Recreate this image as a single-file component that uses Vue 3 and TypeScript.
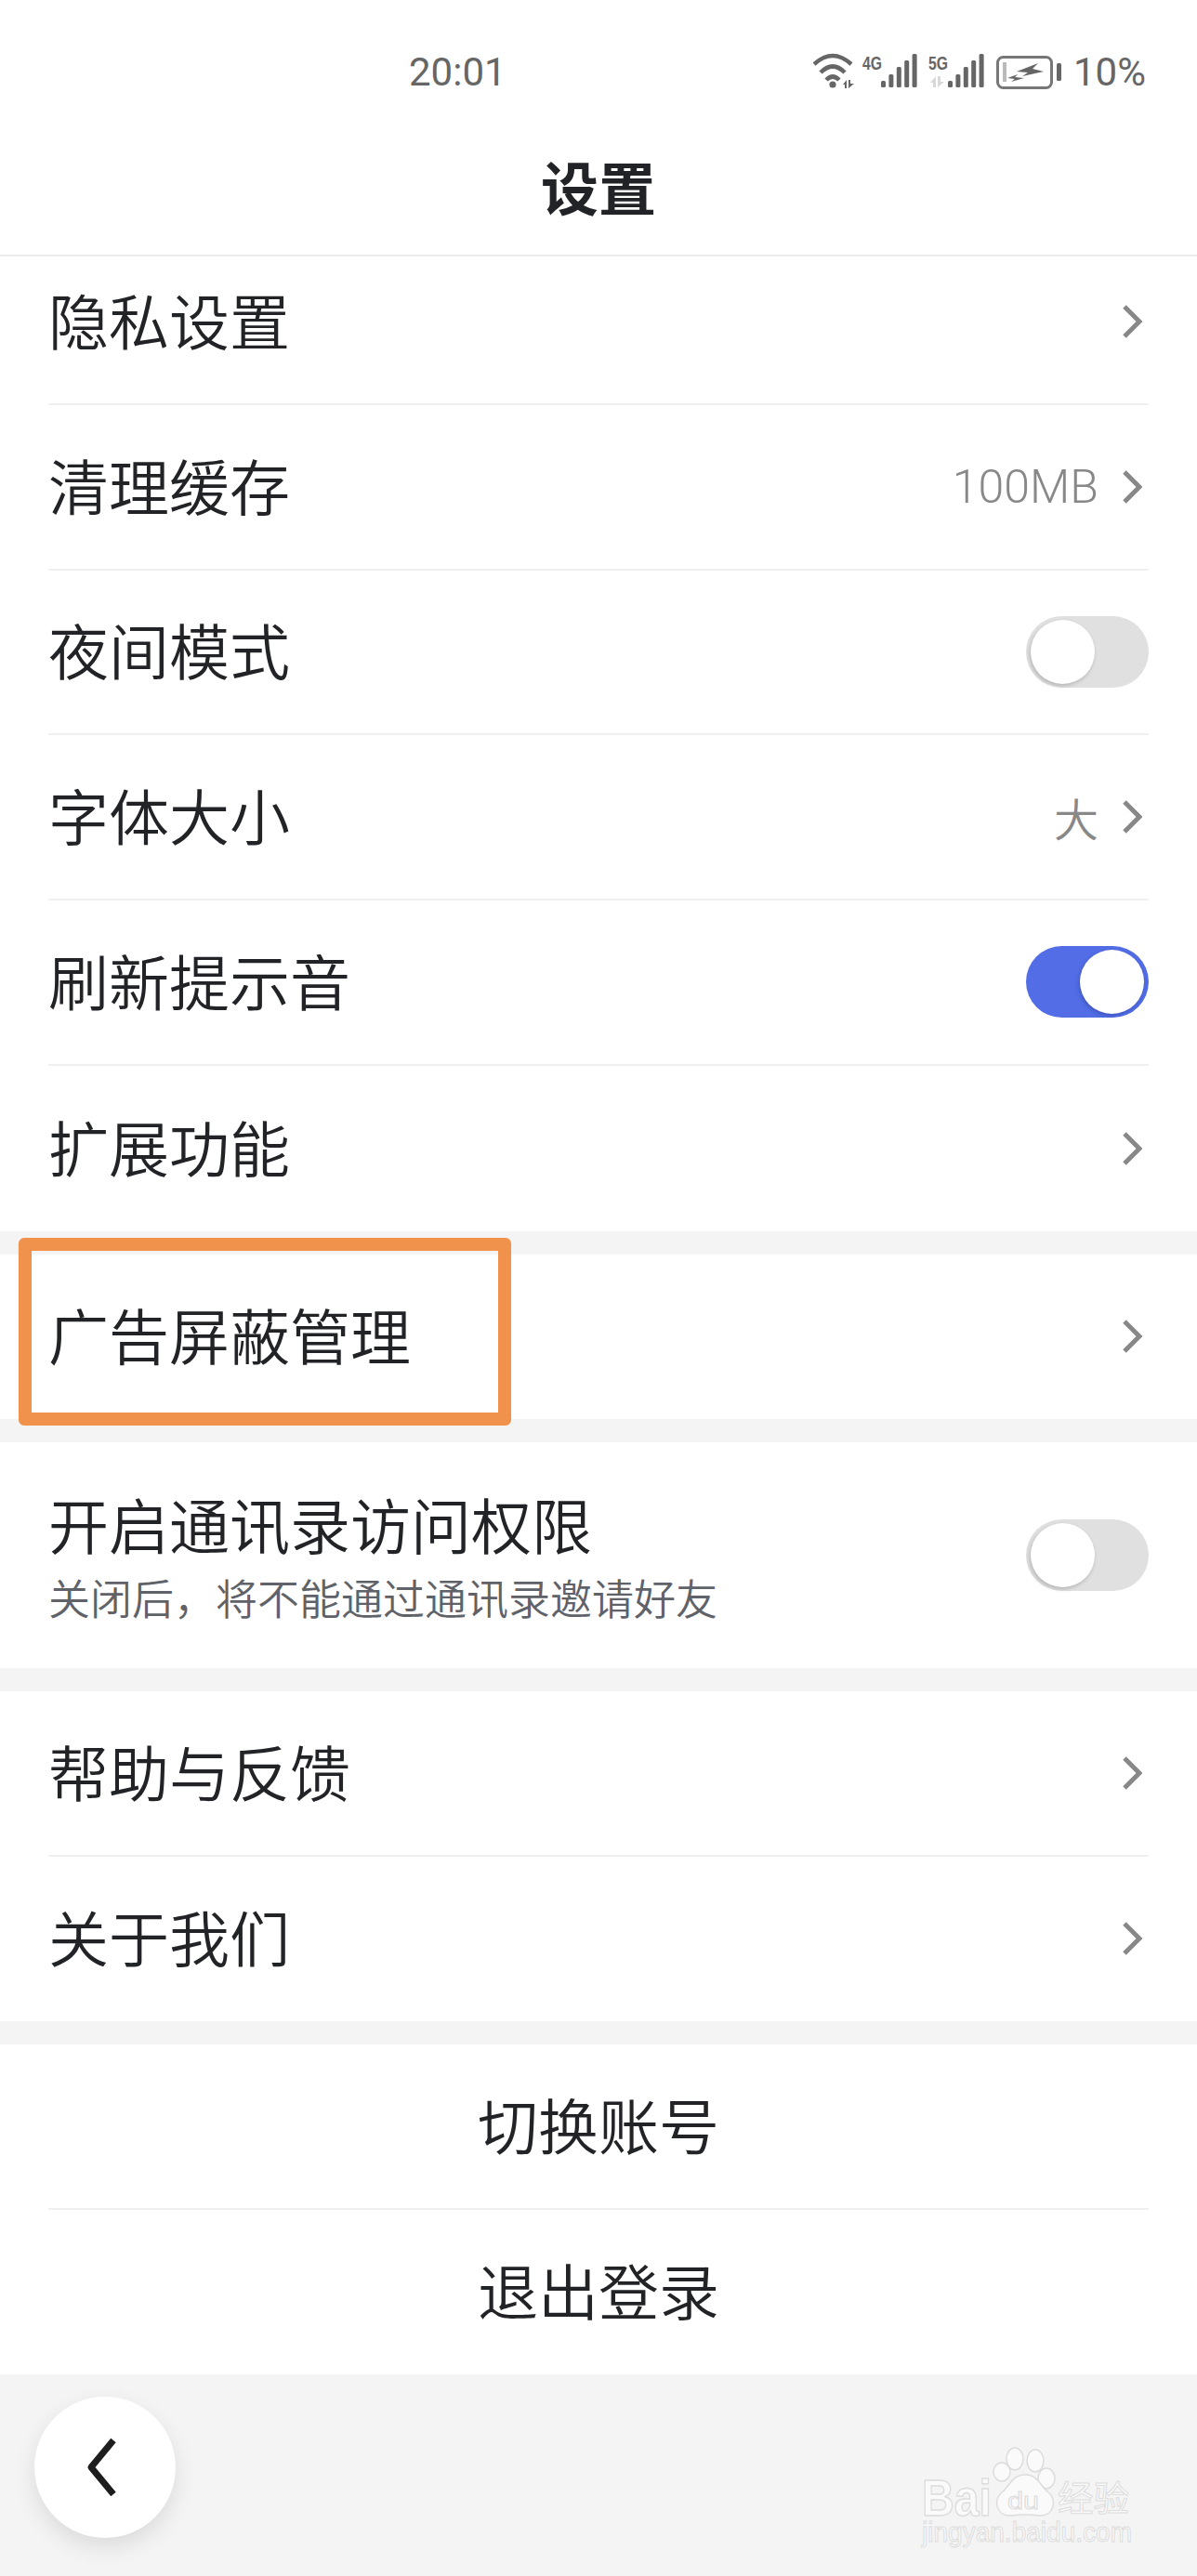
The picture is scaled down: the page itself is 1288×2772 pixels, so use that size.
<script setup lang="ts">
interface Row {
  label: string
  value?: string
  toggle?: boolean
  sub?: string
  center?: boolean
  boxed?: boolean
}

const sections: { key: string; rows: Row[] }[] = [
  {
    key: 'general',
    rows: [
      { label: '隐私设置' },
      { label: '清理缓存', value: '100MB' },
      { label: '夜间模式', toggle: false },
      { label: '字体大小', value: '大' },
      { label: '刷新提示音', toggle: true },
      { label: '扩展功能' },
    ],
  },
  { key: 'ads', rows: [{ label: '广告屏蔽管理', boxed: true }] },
  {
    key: 'contacts',
    rows: [{ label: '开启通讯录访问权限', toggle: false, sub: '关闭后，将不能通过通讯录邀请好友' }],
  },
  { key: 'help', rows: [{ label: '帮助与反馈' }, { label: '关于我们' }] },
  {
    key: 'account',
    rows: [
      { label: '切换账号', center: true },
      { label: '退出登录', center: true },
    ],
  },
]

const bars = [
  { x: 0, h: 7 },
  { x: 8.4, h: 14 },
  { x: 16.8, h: 22 },
  { x: 25.2, h: 29 },
  { x: 33.6, h: 36 },
]
</script>

<template>
  <div class="page">
    <div class="status">
      <span class="time">20:01</span>
      <svg class="status-icons" width="285" height="42" viewBox="0 0 285 42">
        <!-- wifi -->
        <g fill="none" stroke="#666" stroke-width="4.5">
          <path d="M1 13 Q21 -5 41 13" />
          <path d="M8 22 Q21 9 34 22" />
          <path d="M14 30 Q21 23 28 30" />
        </g>
        <circle cx="21" cy="35" r="3.6" fill="#666" />
        <path d="M32 35L36 30V39H34V35ZM38 30H40V34H44L38 39Z" fill="#666" />
        <!-- sim 1 -->
        <text x="53" y="19" class="net" textLength="21" lengthAdjust="spacingAndGlyphs">4G</text>
        <g transform="translate(73 0)">
          <rect v-for="b in bars" :key="b.x" :x="b.x" :y="38 - b.h" width="5" :height="b.h" rx="1.5" fill="#666" />
        </g>
        <!-- sim 2 -->
        <text x="124" y="19" class="net" textLength="21" lengthAdjust="spacingAndGlyphs">5G</text>
        <path d="M126 33L132 26V38H129V33ZM134 26H137V32H141L134 38Z" fill="#d8d8d8" />
        <g transform="translate(145 0)">
          <rect v-for="b in bars" :key="b.x" :x="b.x" :y="38 - b.h" width="5" :height="b.h" rx="1.5" fill="#666" />
        </g>
        <!-- battery -->
        <rect x="198.5" y="5.5" width="58" height="33" rx="6" fill="none" stroke="#777" stroke-width="3" />
        <rect x="204" y="11" width="4" height="21" fill="#bbb" />
        <path d="M219 21L242 12L236 18L248 21L225 26L231 22ZM209 28L220 24L217 27L227 28L213 32L217 29Z" fill="#666" />
        <rect x="262" y="12" width="5" height="19" rx="1.5" fill="#666" />
      </svg>
      <span class="battery">10%</span>
    </div>

    <header class="nav">设置</header>

    <div class="scroll">
      <section v-for="s in sections" :key="s.key" class="section" :class="s.key">
        <div v-for="r in s.rows" :key="r.label" class="row" :class="{ center: r.center }">
          <div class="row-body">
            <div class="label">{{ r.label }}</div>
            <div v-if="r.sub" class="sub">{{ r.sub }}</div>
          </div>
          <span v-if="r.value" class="value" :class="{ latin: r.value === '100MB' }">{{ r.value }}</span>
          <span v-if="r.toggle !== undefined" class="toggle" :class="{ on: r.toggle }"><i></i></span>
          <svg v-else-if="!r.center" class="chevron" width="22" height="38" viewBox="0 0 22 38">
            <path d="M3 3 L19 19 L3 35" fill="none" stroke="#888" stroke-width="5" />
          </svg>
          <div v-if="r.boxed" class="highlight"></div>
        </div>
      </section>
    </div>

    <button class="back" type="button" aria-label="返回">
      <svg width="36" height="64" viewBox="0 0 36 64">
        <path d="M31 3 L7 32 L31 61" fill="none" stroke="#1e1e1e" stroke-width="7" stroke-linejoin="round" />
      </svg>
    </button>

    <svg class="watermark" width="232" height="112" viewBox="0 0 232 112">
      <g class="wm-shape">
        <ellipse cx="90" cy="28" rx="9" ry="10" />
        <ellipse cx="104" cy="14" rx="9" ry="12" />
        <ellipse cx="126" cy="16" rx="9" ry="12" />
        <ellipse cx="138" cy="35" rx="9" ry="11" />
        <path d="M115 31 C101 31 98 44 90 50 C80 58 84 76 100 75 C108 74 122 74 130 75 C146 76 150 58 140 50 C132 44 129 31 115 31Z" />
      </g>
      <text x="4" y="75" class="wm-text wm-bold" font-size="56" textLength="75" lengthAdjust="spacingAndGlyphs">Bai</text>
      <text x="96" y="68" class="wm-text" font-size="26" textLength="34" lengthAdjust="spacingAndGlyphs">du</text>
      <text x="150" y="70" class="wm-text wm-cn" font-size="38" textLength="77" lengthAdjust="spacingAndGlyphs">经验</text>
      <text x="4" y="103" class="wm-text" font-size="30" textLength="226" lengthAdjust="spacingAndGlyphs">jingyan.baidu.com</text>
    </svg>
  </div>
</template>

<style scoped>
.page {
  position: relative;
  width: 1288px;
  height: 2772px;
  overflow: hidden;
  background: #f4f4f4;
  color: #222326;
  font-family: "Noto Sans CJK SC", "Noto Sans", sans-serif;
}
.status {
  height: 132px;
  background: #fff;
  display: flex;
  align-items: flex-start;
  padding-top: 56px;
  padding-left: 440px;
  box-sizing: border-box;
  font-family: Roboto, "Noto Sans", sans-serif;
  color: #666;
}
.time { font-size: 42px; line-height: 44px; width: 435px; }
.net { font-family: "Liberation Sans", sans-serif; font-size: 21px; font-weight: 700; fill: #666; }
.battery { font-size: 42px; line-height: 44px; margin-left: -5px; }
.nav {
  height: 144px;
  background: #fff;
  border-bottom: 2px solid #ececec;
  box-sizing: border-box;
  display: flex;
  align-items: center;
  justify-content: center;
  font-size: 62px;
  font-weight: 700;
  padding-bottom: 7px;
}
.scroll { height: 2496px; overflow: hidden; }
.section { background: #fff; margin-bottom: 25px; }
.section.general { margin-top: -18px; }
.row {
  position: relative;
  height: 177.75px;
  margin: 0 52px;
  display: flex;
  align-items: center;
  border-bottom: 2px solid #f0f0f0;
  box-sizing: border-box;
}
.row:last-child { border-bottom: none; }
.ads .row { height: 177.5px; }
.contacts .row { height: 243px; }
.help .row, .account .row { height: 177.5px; }
.row-body { flex: 1; min-width: 0; padding-bottom: 6px; }
.contacts .row-body { padding-bottom: 0; }
.label { font-size: 65px; line-height: 80px; font-weight: 350; }
.sub { font-size: 45px; line-height: 60px; margin-top: 10px; color: #5f6268; font-weight: 350; }
.row.center .label { text-align: center; }
.value { font-size: 48px; color: #888; margin-right: 25px; font-weight: 350; }
.value.latin { font-family: Roboto, sans-serif; font-size: 50px; font-weight: 300; }
.chevron { margin-right: 7px; flex: none; }
.toggle {
  position: relative;
  width: 132px;
  height: 77px;
  border-radius: 39px;
  background: #e0e0e0;
  flex: none;
}
.toggle i {
  position: absolute;
  left: 5px;
  top: 4px;
  width: 69px;
  height: 69px;
  border-radius: 50%;
  background: #fff;
  box-shadow: -1px 2px 4px rgba(0, 0, 0, 0.2);
}
.toggle.on { background: #526de5; }
.toggle.on i { left: 58px; box-shadow: -1px 2px 4px rgba(30, 40, 120, 0.35); }
.highlight {
  position: absolute;
  left: -32px;
  top: -18px;
  width: 530px;
  height: 202px;
  border: 14px solid #f0914c;
  border-radius: 6px;
  box-sizing: border-box;
}
.back {
  position: absolute;
  left: 37px;
  top: 2579px;
  width: 152px;
  height: 152px;
  border: none;
  border-radius: 50%;
  background: #fff;
  box-shadow: 0 10px 24px rgba(0, 0, 0, 0.1);
  display: flex;
  align-items: center;
  justify-content: center;
  padding: 0 8px 0 0;
}
.watermark { position: absolute; left: 988px; top: 2632px; overflow: visible; }
.wm-shape { fill: #fafafa; stroke: #dcdcdc; stroke-width: 1.5; }
.wm-text {
  font-family: "Liberation Sans", sans-serif;
  fill: #fafafa;
  stroke: #dcdcdc;
  stroke-width: 1;
}
.wm-bold { font-weight: 700; stroke-width: 1.5; }
.wm-cn { font-family: "Noto Sans CJK SC", sans-serif; }
</style>
